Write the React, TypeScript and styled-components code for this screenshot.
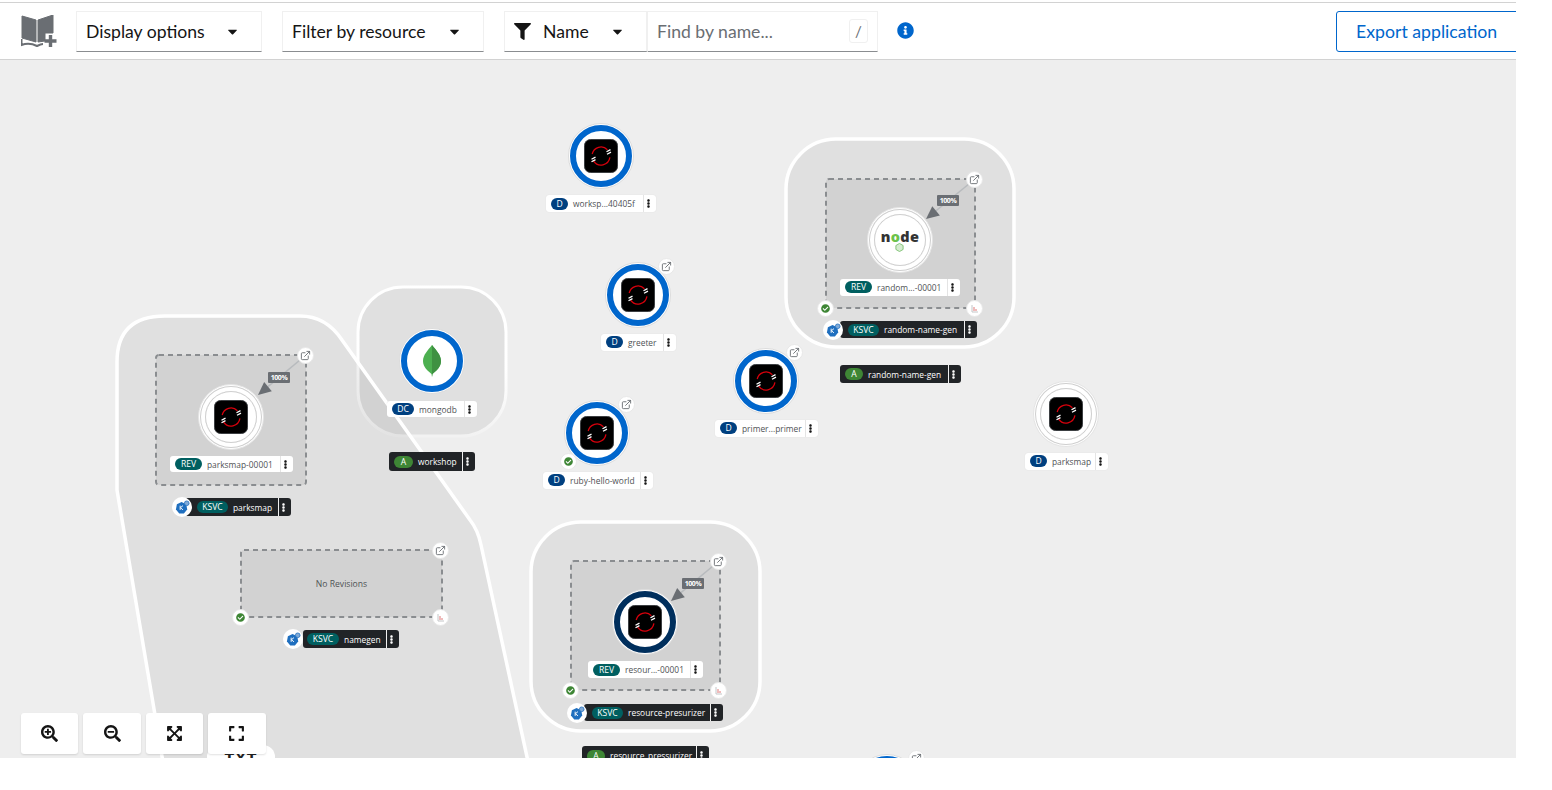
import React from "react";
import styled, { createGlobalStyle } from "styled-components";
import { FaCaretDown, FaFilter, FaInfoCircle, FaSearchPlus, FaSearchMinus, FaExpandArrowsAlt, FaExpand, FaCheckCircle, FaEllipsisV } from "react-icons/fa";
import { ExternalLink } from "lucide-react";

const Global = createGlobalStyle`
  html, body { margin: 0; padding: 0; background: #fff; overflow: hidden; }
  body { font-family: "Open Sans", "Liberation Sans", sans-serif; }
`;

const Page = styled.div`
  width: 1516px;
  height: 758px;
  overflow: hidden;
  padding-top: 2px;
  box-sizing: border-box;
  display: flex;
  flex-direction: column;
`;
const Toolbar = styled.div`
  flex: none;
  height: 58px;
  box-sizing: border-box;
  border-top: 1px solid #d2d2d2;
  border-bottom: 1px solid #d2d2d2;
  display: flex;
  align-items: center;
  padding-left: 21px;
  background: #fff;
  font-family: Lato, "Open Sans", sans-serif;
`;
const Select = styled.div<{ $w: number; $ml: number }>`
  width: ${(p) => p.$w}px;
  margin-left: ${(p) => p.$ml}px;
  height: 41px;
  box-sizing: border-box;
  border: 1px solid #f0f0f0;
  border-bottom: 1px solid #8a8d90;
  display: flex;
  align-items: center;
  padding: 0 21px 0 9px;
  font-size: 17.6px;
  color: #151515;
  justify-content: space-between;
  svg { flex: none; }
`;
const NameSelect = styled(Select)`
  padding-right: 21px;
  border-right: 2px solid #f0f0f0;
`;
const NameGroup = styled.span`
  display: flex;
  align-items: center;
  gap: 12px;
`;
const SearchBox = styled.div`
  width: 230px;
  height: 41px;
  box-sizing: border-box;
  border: 1px solid #f0f0f0;
  border-left: none;
  border-bottom: 1px solid #8a8d90;
  display: flex;
  align-items: center;
  justify-content: space-between;
  padding: 0 9px;
  font-size: 17.6px;
  color: #6a6e73;
`;
const Kbd = styled.span`
  width: 17px;
  height: 22px;
  border: 1px solid #f0f0f0;
  border-radius: 3px;
  font-size: 15px;
  display: flex;
  align-items: center;
  justify-content: center;
`;
const InfoButton = styled.span`
  margin-left: 19px;
  margin-bottom: 2px;
  color: #06c;
  display: flex;
`;
const ExportButton = styled.button`
  margin-left: auto;
  margin-right: -10px;
  width: 190px;
  height: 41px;
  background: #fff;
  color: #06c;
  border: 1px solid #06c;
  border-radius: 3px;
  font: 17.7px Lato, "Open Sans", sans-serif;
  text-align: left;
  padding: 0 0 0 19px;
`;
const Canvas = styled.div`
  position: relative;
  flex: 1;
  background: #eeeeee;
  overflow: hidden;
`;
const Layer = styled.svg`
  position: absolute;
  left: 0;
  top: 0;
  width: 1516px;
  height: 698px;
`;
const Disc = styled.div<{ $cx: number; $cy: number; $plain?: boolean }>`
  position: absolute;
  left: ${(p) => p.$cx - 33}px;
  top: ${(p) => p.$cy - 60 - 33}px;
  width: 66px;
  height: 66px;
  box-sizing: border-box;
  border-radius: 50%;
  background: #fff;
  border: 1px solid ${(p) => (p.$plain ? "#e4e4e4" : "#dcdcdc")};
  display: flex;
  align-items: center;
  justify-content: center;
`;
const Ring = styled.div<{ $color?: string }>`
  width: ${(p) => (p.$color ? 62 : 52)}px;
  height: ${(p) => (p.$color ? 62 : 52)}px;
  box-sizing: border-box;
  border-radius: 50%;
  border: ${(p) => (p.$color ? `6px solid ${p.$color}` : "1px solid #cfcfcf")};
  box-shadow: ${(p) => (p.$color ? "none" : "0 0 0 4px #fff, 0 0 0 5px #cfcfcf")};
  display: flex;
  align-items: center;
  justify-content: center;
  flex: none;
`;
const Round = styled.div<{ $cx: number; $cy: number }>`
  position: absolute;
  left: ${(p) => p.$cx - 9}px;
  top: ${(p) => p.$cy - 60 - 8.5}px;
  width: 17px;
  height: 17px;
  border-radius: 50%;
  background: #fff;
  border: 1px solid #e8e8e8;
  box-sizing: border-box;
  display: flex;
  align-items: center;
  justify-content: center;
  color: #6a6e73;
`;
const LabelBox = styled.div<{ $x: number; $y: number; $w: number; $h?: number; $dark?: boolean; $pad?: number }>`
  position: absolute;
  left: ${(p) => p.$x}px;
  top: ${(p) => p.$y - 60}px;
  width: ${(p) => p.$w}px;
  height: ${(p) => p.$h ?? 17}px;
  box-sizing: border-box;
  border-radius: 3px;
  background: ${(p) => (p.$dark ? "#212427" : "#fff")};
  color: ${(p) => (p.$dark ? "#fff" : "#4f5255")};
  box-shadow: ${(p) => (p.$dark ? "none" : "0 0 1px #d2d2d2")};
  display: flex;
  align-items: center;
  padding-left: ${(p) => p.$pad ?? 5}px;
  font-size: 8.4px;
  white-space: nowrap;
`;
const Chip = styled.span<{ $bg: string; $w: number }>`
  flex: none;
  width: ${(p) => p.$w}px;
  height: 12px;
  border-radius: 6px;
  background: ${(p) => p.$bg};
  color: #fff;
  font-size: 8.6px;
  line-height: 12px;
  text-align: center;
`;
const LabelText = styled.span`
  flex: 1;
  padding-left: 5px;
  overflow: hidden;
`;
const Kebab = styled.span<{ $dark?: boolean }>`
  flex: none;
  width: 13px;
  box-sizing: border-box;
  padding-right: 3px;
  align-self: stretch;
  border-left: 1px solid ${(p) => (p.$dark ? "#f0f0f0" : "#e4e4e4")};
  display: flex;
  align-items: center;
  justify-content: center;
  color: ${(p) => (p.$dark ? "#fff" : "#151515")};
`;
const Percent = styled.span<{ $x: number; $y: number }>`
  position: absolute;
  left: ${(p) => p.$x}px;
  top: ${(p) => p.$y - 60}px;
  width: 22px;
  height: 11px;
  border-radius: 1px;
  background: #6a6e73;
  color: #fff;
  font-size: 7px;
  font-weight: 700;
  letter-spacing: -0.4px;
  line-height: 11px;
  text-align: center;
`;
const NoRevisions = styled.span`
  position: absolute;
  left: 241px;
  top: ${550 - 60}px;
  width: 201px;
  height: 67px;
  display: flex;
  align-items: center;
  justify-content: center;
  font-size: 8.6px;
  color: #4f5255;
`;
const NodeLogo = styled.span`
  position: relative;
  margin-bottom: 5px;
  font: 800 14.5px/1 "Open Sans", "Liberation Sans", sans-serif;
  color: #333;
  letter-spacing: 0.3px;
  b { color: #6cc24a; font-weight: 800; }
`;
const NodeHex = styled.svg`
  position: absolute;
  left: 14px;
  top: 13px;
`;
const KnativeBadge = styled.div<{ $cx: number; $cy: number }>`
  position: absolute;
  left: ${(p) => p.$cx - 10}px;
  top: ${(p) => p.$cy - 60 - 10}px;
  width: 20px;
  height: 20px;
  border-radius: 50%;
  background: #fff;
  display: flex;
  align-items: center;
  justify-content: center;
`;
const ZoomBar = styled.div`
  position: absolute;
  left: 21px;
  top: ${713 - 60}px;
  display: flex;
  gap: 5px;
`;
const ZoomButton = styled.button`
  width: 57.4px;
  height: 41px;
  border: none;
  border-radius: 3px;
  background: #fff;
  color: #151515;
  box-shadow: 0 1px 2px rgba(3, 3, 3, 0.12);
  display: flex;
  align-items: center;
  justify-content: center;
  padding: 0;
`;
const HiddenTab = styled.div`
  position: absolute;
  left: 207px;
  top: ${745 - 60}px;
  width: 68px;
  height: 30px;
  background: #fff;
  border-radius: 12px;
  display: flex;
  justify-content: center;
  padding-top: 6px;
  box-sizing: border-box;
  font: 700 17px/1 "Liberation Mono", monospace;
  letter-spacing: 1px;
  color: #222;
`;

const OpenShift = () => (
  <svg width="34" height="34" viewBox="0 0 34 34">
    <rect x="0.5" y="0.5" width="33" height="33" rx="6" fill="#000" stroke="#3c3f42" />
    <path d="M23.4 10.7A9 9 0 0 0 8.2 15M9.6 22.100A9 9 0 0 0 25.900 18.400" fill="none" stroke="#d8000c" strokeWidth="1.300" />
    <path d="M22.500 12.800l4-2.200M23 15.300l4-2.200M7.500 20.300l4-2.200M7.500 22.800l4-2.200" stroke="#fff" strokeWidth="1.200" />
  </svg>
);
const Leaf = () => (
  <svg width="20" height="34" viewBox="0 0 20 34">
    <path d="M10 1C6 6 1 11 1 17c0 6 5 10 8.5 13L10 33l.5-3C14 27 19 23 19 17 19 11 14 6 10 1z" fill="#4caf50" />
    <path d="M10 1c4 5 9 10 9 16 0 6-5 10-8.500 13L10 33z" fill="#3f9142" />
  </svg>
);
const Knative = () => (
  <svg width="15" height="15" viewBox="0 0 16 16">
    <path d="M7 2l5 2.500 1 5.500-3.500 4.500h-5L1 10l1-5.500z" fill="#1f6fbf" />
    <circle cx="12.500" cy="3.500" r="2.500" fill="#7fa9d6" stroke="#1f6fbf" strokeWidth="0.8" />
    <path d="M5.500 6v4.500M8.500 6L5.800 8.200 8.500 10.500" stroke="#fff" strokeWidth="1" fill="none" />
  </svg>
);
const Book = () => (
  <svg width="36" height="32" viewBox="0 0 36 32">
    <path d="M1 1L15 5V27L1 23z" fill="#6a6e73" stroke="#6a6e73" />
    <path d="M17 5L32 0V18H24V26L17 27z" fill="#6a6e73" stroke="#6a6e73" />
    <path d="M0.500 24V30C6 28 12 29 16 31C18 30 20 29 22 29" fill="none" stroke="#6a6e73" strokeWidth="2" />
    <path d="M23.500 26h12M29.500 20v12" stroke="#6a6e73" strokeWidth="3.400" />
  </svg>
);
const Pod = () => (
  <svg width="9" height="9" viewBox="0 0 9 9">
    <path d="M2 1v7h6" fill="none" stroke="#c4c6c8" strokeWidth="1" />
    <path d="M4 3v4M6 5v2" stroke="#e9a0a0" strokeWidth="1.400" />
  </svg>
);

type LP = { x: number; y: number; w: number; h?: number; dark?: boolean; pad?: number; chip: string; bg: string; cw: number; text: string };
const Label = ({ x, y, w, h, dark, pad, chip, bg, cw, text }: LP) => (
  <LabelBox $x={x} $y={y} $w={w} $h={h} $dark={dark} $pad={pad}>
    <Chip $bg={bg} $w={cw}>{chip}</Chip>
    <LabelText>{text}</LabelText>
    <Kebab $dark={dark}><FaEllipsisV size={9} /></Kebab>
  </LabelBox>
);
const Link = ({ cx, cy }: { cx: number; cy: number }) => (
  <Round $cx={cx} $cy={cy}><ExternalLink size={11} strokeWidth={2} /></Round>
);
const Check = ({ cx, cy }: { cx: number; cy: number }) => (
  <Round $cx={cx} $cy={cy}><FaCheckCircle size={9} color="#3e8635" /></Round>
);
const Metric = ({ cx, cy }: { cx: number; cy: number }) => (
  <Round $cx={cx} $cy={cy}><Pod /></Round>
);

const BLUE = "#0066cc";
const NAVY = "#004080";
const TEAL = "#005f60";
const GREEN = "#3e8635";
const oy = 60;

const Arrow = ({ x1, y1, x2, y2 }: { x1: number; y1: number; x2: number; y2: number }) => {
  const a = Math.atan2(y2 - y1, x2 - x1);
  const L = 13, W = 6;
  const bx = x2 - L * Math.cos(a), by = y2 - L * Math.sin(a);
  const nx = -Math.sin(a) * W, ny = Math.cos(a) * W;
  return (
    <>
      <line x1={x1} y1={y1 - oy} x2={bx} y2={by - oy} stroke="#b8bbbe" strokeWidth="1.500" />
      <polygon points={`${x2},${y2 - oy} ${bx + nx},${by + ny - oy} ${bx - nx},${by - ny - oy}`} fill="#6a6e73" />
    </>
  );
};
const Dashed = ({ x, y, w, h }: { x: number; y: number; w: number; h: number }) => (
  <rect x={x} y={y - oy} width={w} height={h} rx="3" fill="#d2d2d2" stroke="#8a8d90" strokeWidth="2" strokeDasharray="5 4" />
);

export default function App() {
  return (
    <Page>
      <Global />
      <Toolbar>
        <Book />
        <Select $w={186} $ml={19}>Display options<FaCaretDown size={15} /></Select>
        <Select $w={202} $ml={20}>Filter by resource<FaCaretDown size={15} /></Select>
        <NameSelect $w={144} $ml={20}>
          <NameGroup><FaFilter size={17} />Name</NameGroup>
          <FaCaretDown size={15} />
        </NameSelect>
        <SearchBox>Find by name...<Kbd>/</Kbd></SearchBox>
        <InfoButton><FaInfoCircle size={17} /></InfoButton>
        <ExportButton>Export application</ExportButton>
      </Toolbar>
      <Canvas>
        <Layer viewBox="0 0 1516 698">
          <defs>
            <linearGradient id="fade" x1="0" y1="0" x2="0" y2="1">
              <stop offset="0.55" stopColor="#fff" />
              <stop offset="1" stopColor="#f2f2f2" />
            </linearGradient>
          </defs>
          <rect x="358" y={287 - oy} width="148" height="149" rx="45" fill="rgba(0,0,0,.06)" stroke="url(#fade)" strokeWidth="3" />
          <path d={`M117 ${490 - oy} V${362 - oy} Q117 ${316 - oy} 165 ${316 - oy} H300 Q326 ${316 - oy} 342 ${340 - oy} L470 ${520 - oy} Q478 ${530 - oy} 481 ${545 - oy} L532 ${780 - oy} H166 Z`} fill="rgba(0,0,0,.06)" stroke="#fff" strokeWidth="3.500" />
          <rect x="786" y={139 - oy} width="228" height="208" rx="50" fill="rgba(0,0,0,.06)" stroke="#fff" strokeWidth="3.500" />
          <rect x="531" y={522 - oy} width="229" height="209" rx="50" fill="rgba(0,0,0,.06)" stroke="#fff" strokeWidth="3.500" />
          <Dashed x={826} y={179} w={149} h={129} />
          <Dashed x={156} y={355} w={150} h={130} />
          <Dashed x={241} y={550} w={201} h={67} />
          <Dashed x={571} y={561} w={149} h={129} />
          <Arrow x1={975} y1={179} x2={926} y2={219} />
          <Arrow x1={306} y1={355} x2={258} y2={395} />
          <Arrow x1={719} y1={561} x2={671} y2={601} />
        </Layer>

        <Disc $cx={601} $cy={156}><Ring $color={BLUE}><OpenShift /></Ring></Disc>
        <Label x={546} y={195} w={110} chip="D" bg={NAVY} cw={17} text="worksp...40405f" />

        <Disc $cx={638} $cy={295}><Ring $color={BLUE}><OpenShift /></Ring></Disc>
        <Link cx={667} cy={266} />
        <Label x={601} y={333.5} w={75} chip="D" bg={NAVY} cw={17} text="greeter" />

        <Disc $cx={766} $cy={381}><Ring $color={BLUE}><OpenShift /></Ring></Disc>
        <Link cx={795} cy={352} />
        <Label x={715} y={419.5} w={103} chip="D" bg={NAVY} cw={17} text="primer...primer" />

        <Disc $cx={597} $cy={433}><Ring $color={BLUE}><OpenShift /></Ring></Disc>
        <Link cx={627} cy={404} />
        <Check cx={569} cy={461} />
        <Label x={543} y={471.5} w={110} chip="D" bg={NAVY} cw={17} text="ruby-hello-world" />

        <Disc $cx={1066} $cy={414} $plain><Ring><OpenShift /></Ring></Disc>
        <Label x={1025} y={452.5} w={83} chip="D" bg={NAVY} cw={17} text="parksmap" />

        <Disc $cx={432} $cy={361}><Ring $color={BLUE}><Leaf /></Ring></Disc>
        <Label x={387} y={401} w={90} h={16} chip="DC" bg={NAVY} cw={22} text="mongodb" />
        <Label x={389} y={452} w={86} h={19} dark chip="A" bg={GREEN} cw={19} text="workshop" />

        <Disc $cx={900} $cy={240} $plain>
          <Ring>
            <NodeLogo>n<b>o</b>de<NodeHex width="9" height="9" viewBox="0 0 10 10"><path d="M5 .5l4 2.300v4.400l-4 2.300-4-2.300V2.800z" fill="#d5ecd0" stroke="#7cc06f" /></NodeHex></NodeLogo>
          </Ring>
        </Disc>
        <Percent $x={937} $y={195}>100%</Percent>
        <Link cx={975} cy={179} />
        <Check cx={826} cy={308} />
        <Metric cx={975} cy={308} />
        <Label x={840} y={278.5} w={120} chip="REV" bg={TEAL} cw={27} text="random...-00001" />
        <Label x={840} y={321} w={137} dark pad={8} chip="KSVC" bg={TEAL} cw={31} text="random-name-gen" />
        <KnativeBadge $cx={833} $cy={330}><Knative /></KnativeBadge>
        <Label x={840} y={365} w={121} h={18} dark chip="A" bg={GREEN} cw={18} text="random-name-gen" />

        <Disc $cx={231} $cy={417} $plain><Ring><OpenShift /></Ring></Disc>
        <Percent $x={268} $y={372}>100%</Percent>
        <Link cx={306} cy={355} />
        <Label x={170} y={456} w={123} h={16} chip="REV" bg={TEAL} cw={27} text="parksmap-00001" />
        <Label x={185} y={498} w={106} h={18} dark pad={12} chip="KSVC" bg={TEAL} cw={31} text="parksmap" />
        <KnativeBadge $cx={182} $cy={507}><Knative /></KnativeBadge>

        <NoRevisions>No Revisions</NoRevisions>
        <Link cx={441} cy={550} />
        <Check cx={241} cy={617} />
        <Metric cx={441} cy={617} />
        <Label x={303} y={630} w={96} h={18} dark pad={4} chip="KSVC" bg={TEAL} cw={32} text="namegen" />
        <KnativeBadge $cx={293} $cy={639}><Knative /></KnativeBadge>

        <Disc $cx={645} $cy={622}><Ring $color="#002f5d"><OpenShift /></Ring></Disc>
        <Percent $x={682} $y={578}>100%</Percent>
        <Link cx={719} cy={561} />
        <Check cx={571} cy={690} />
        <Metric cx={719} cy={690} />
        <Label x={588} y={661} w={115} chip="REV" bg={TEAL} cw={27} text="resour...-00001" />
        <Label x={584} y={704} w={139} dark pad={8} chip="KSVC" bg={TEAL} cw={31} text="resource-presurizer" />
        <KnativeBadge $cx={577} $cy={713}><Knative /></KnativeBadge>
        <Label x={582} y={746} w={127} h={19} dark chip="A" bg={GREEN} cw={18} text="resource_pressurizer" />

        <Disc $cx={887} $cy={787}><Ring $color={BLUE}><OpenShift /></Ring></Disc>
        <Link cx={917} cy={758} />

        <HiddenTab>TXT</HiddenTab>
        <ZoomBar>
          <ZoomButton><FaSearchPlus size={17} /></ZoomButton>
          <ZoomButton><FaSearchMinus size={17} /></ZoomButton>
          <ZoomButton><FaExpandArrowsAlt size={17} /></ZoomButton>
          <ZoomButton><FaExpand size={17} /></ZoomButton>
        </ZoomBar>
      </Canvas>
    </Page>
  );
}
